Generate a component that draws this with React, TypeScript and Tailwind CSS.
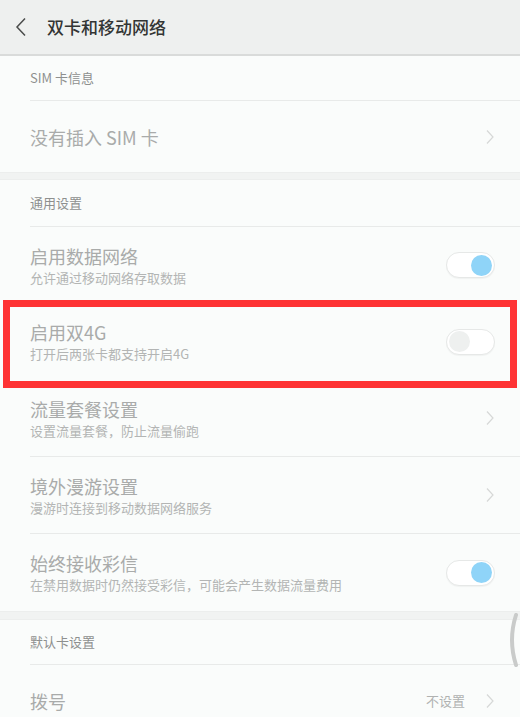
const FONT = "font-['Noto_Sans_CJK_SC','Noto_Sans',sans-serif]";

function Chevron() {
  return (
    <svg width="10" height="16" viewBox="0 0 10 16" className="shrink-0">
      <path d="M2 1.5 L8 8 L2 14.5" fill="none" stroke="#d6d8d7" strokeWidth="1.2" />
    </svg>
  );
}

function Toggle({ on }: { on: boolean }) {
  return (
    <div className="w-[49px] h-[26px] rounded-full border border-[#e6e8e7] bg-white flex items-center px-[2px] shadow-[0_1px_1px_rgba(0,0,0,0.04)]">
      {on ? (
        <div className="ml-auto w-[21px] h-[21px] rounded-full bg-[#8fd4f8]" />
      ) : (
        <div className="w-[21px] h-[21px] rounded-full bg-[#eef0ef]" />
      )}
    </div>
  );
}

function SectionTitle({ text, h }: { text: string; h: string }) {
  return (
    <div className={`pl-[30px] ${h}`}>
      <div className="h-full flex items-center border-b border-[#e8eae9] text-[13px] text-[#8e908f]">{text}</div>
    </div>
  );
}

type RowProps = {
  title: string;
  sub?: string;
  right?: React.ReactNode;
  last?: boolean;
  h?: string;
};

function Row({ title, sub, right, last, h = "h-[77px]" }: RowProps) {
  return (
    <div className={`pl-[30px] ${h}`}>
      <div className={`h-full flex items-center pr-[25px] ${last ? "" : "border-b border-[#e8eae9]"}`}>
        <div className="flex-1 min-w-0">
          <div className="text-[18px] leading-[24px] text-[#a9abaa]">{title}</div>
          {sub && <div className="text-[13px] leading-[18px] mt-[1px] text-[#b3b5b4] whitespace-nowrap">{sub}</div>}
        </div>
        {right}
      </div>
    </div>
  );
}

export default function App() {
  return (
    <div className={`w-[520px] h-[717px] overflow-hidden bg-[#fafcfb] relative ${FONT}`}>
      {/* header */}
      <div className="h-[56px] bg-[#eef0ef] border-b-2 border-[#d9dbda] flex items-center">
        <svg width="12" height="20" viewBox="0 0 12 20" className="ml-[15px]">
          <path d="M10 1.5 L2 10 L10 18.5" fill="none" stroke="#4a4c4b" strokeWidth="1.5" />
        </svg>
        <div className="ml-[20px] text-[17px] font-medium text-[#333534]">双卡和移动网络</div>
      </div>

      <SectionTitle text="SIM 卡信息" h="h-[45px]" />
      <Row title="没有插入 SIM 卡" h="h-[71px]" last right={<Chevron />} />

      <div className="h-[8px] bg-[#f1f3f2] border-y border-[#eceeed]" />

      <SectionTitle text="通用设置" h="h-[47px]" />
      <Row title="启用数据网络" sub="允许通过移动网络存取数据" h="h-[76px]" last right={<Toggle on />} />
      <div className="relative">
        <Row title="启用双4G" sub="打开后两张卡都支持开启4G" last right={<Toggle on={false} />} />
        <div className="absolute left-[3px] right-[3px] top-[-3px] bottom-[-8px] border-[7px] border-[#fe3334]" />
      </div>
      <Row title="流量套餐设置" sub="设置流量套餐，防止流量偷跑" right={<Chevron />} />
      <Row title="境外漫游设置" sub="漫游时连接到移动数据网络服务" right={<Chevron />} />
      <Row title="始终接收彩信" sub="在禁用数据时仍然接受彩信，可能会产生数据流量费用" last right={<Toggle on />} />

      <div className="h-[9px] bg-[#f1f3f2] border-y border-[#eceeed]" />

      <SectionTitle text="默认卡设置" h="h-[45px]" />
      <Row
        title="拨号"
        h="h-[72px]"
        last
        right={
          <div className="flex items-center gap-[20px]">
            <span className="text-[13px] text-[#b0b2b1]">不设置</span>
            <Chevron />
          </div>
        }
      />

      {/* scroll indicator */}
      <svg width="12" height="54" viewBox="0 0 12 54" className="absolute right-[2px] top-[613px]">
        <path d="M10 2 Q2 27 10 52" fill="none" stroke="#c9cbca" strokeWidth="4" strokeLinecap="round" />
      </svg>
    </div>
  );
}
